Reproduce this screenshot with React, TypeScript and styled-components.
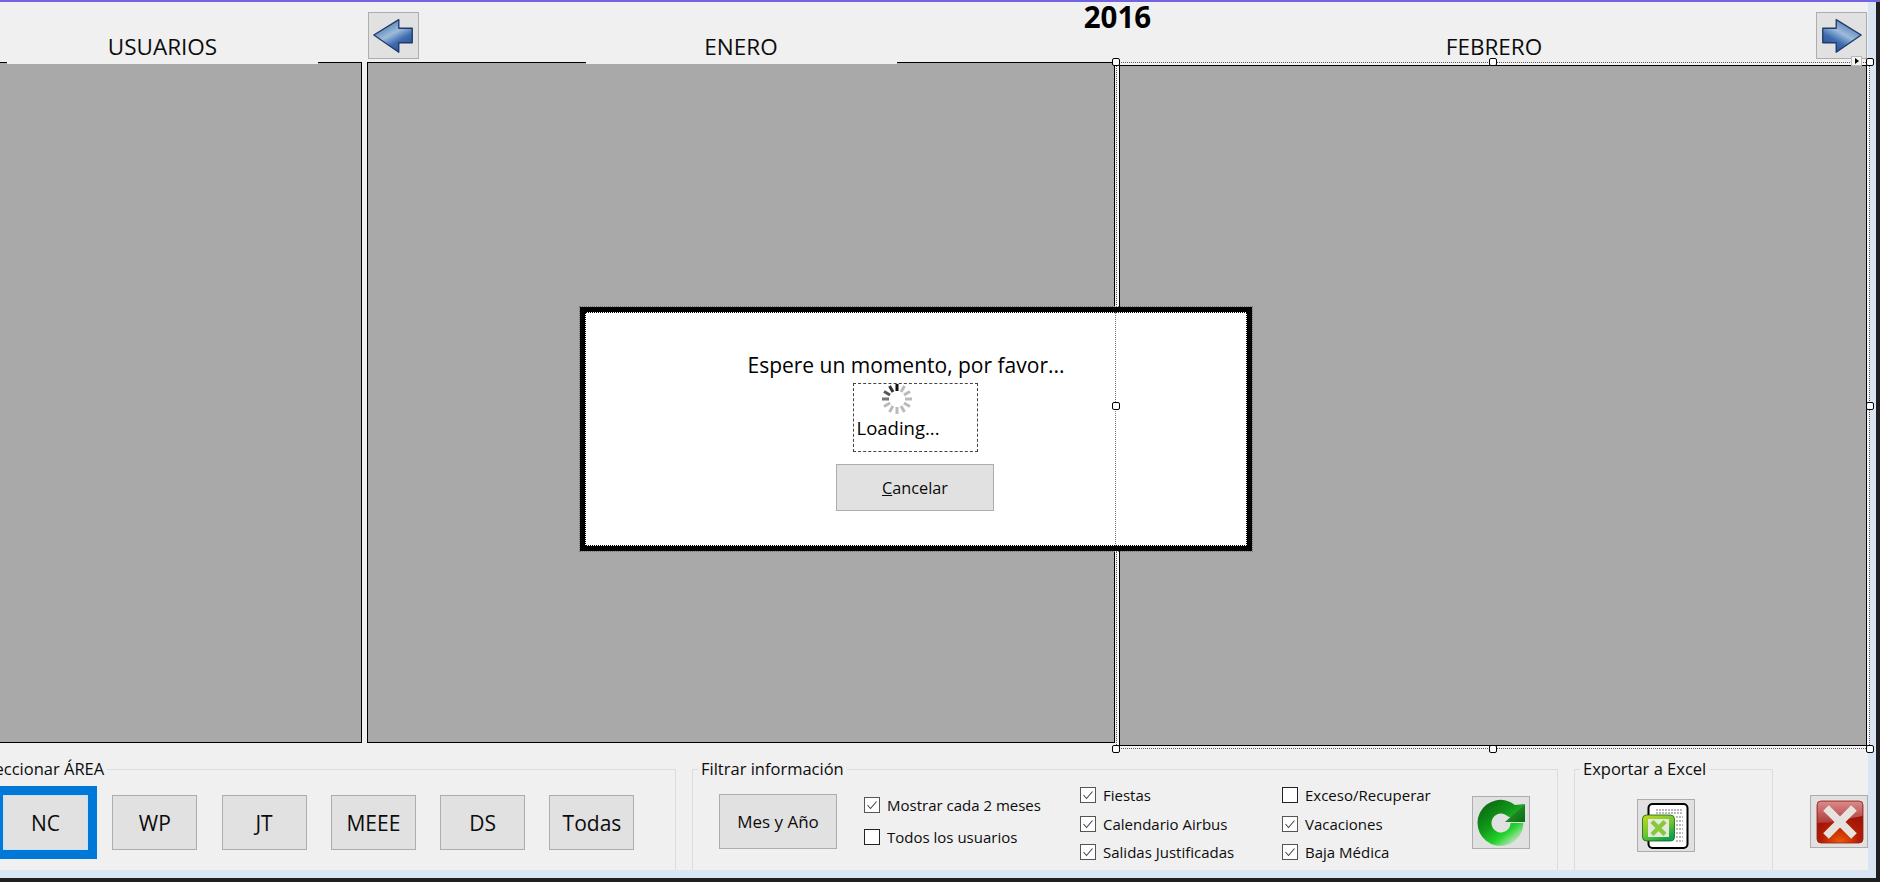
import React from "react";
import styled, { createGlobalStyle, css } from "styled-components";

const GlobalStyle = createGlobalStyle`
  * { box-sizing: border-box; }
  html, body { margin: 0; padding: 0; background: #1f1f1f; overflow: hidden; }
  body { font-family: "Open Sans", "Noto Sans", sans-serif; color: #0c0c0c; }
`;

const FONT = `"Open Sans", "Noto Sans", sans-serif`;

const Page = styled.div`
  position: relative;
  width: 1880px;
  height: 882px;
  display: flex;
  flex-direction: column;
  overflow: hidden;
  background: #1f1f1f;
`;

const TitleEdge = styled.div`
  height: 2px;
  flex: none;
  background: #7263e2;
`;

const Frame = styled.div`
  width: 1876px;
  height: 876px;
  flex: none;
  padding: 0 8px 8px 0;
  background: #d9e5f3;
`;

const Form = styled.div`
  height: 100%;
  display: flex;
  flex-direction: column;
  background: #f0f0f0;
`;

const Calendar = styled.section`
  flex: none;
  margin-left: -37px;
  display: grid;
  grid-template-columns: 399px 5px 748px 1fr;
  grid-template-rows: 60px 681px;
`;

const Year = styled.div`
  grid-column: 3 / 5;
  grid-row: 1;
  justify-self: center;
  align-self: start;
  font: 700 29.5px/30px ${FONT};
  color: #000;
`;

const MonthLabel = styled.div<{ $col: number; $shift?: number }>`
  grid-column: ${(p) => p.$col};
  grid-row: 1;
  justify-self: center;
  align-self: end;
  position: relative;
  z-index: 1;
  width: 311px;
  height: 30px;
  margin-bottom: -2px;
  padding-left: ${(p) => p.$shift ?? 0}px;
  background: #f0f0f0;
  text-align: center;
  font-size: 22.5px;
  line-height: 26px;
`;

const Panel = styled.div<{ $col?: number }>`
  grid-column: ${(p) => p.$col ?? "auto"};
  grid-row: 2;
  background: #a9a9a9;
  border: 1px solid #000;
`;

const Selection = styled.div`
  grid-column: 4;
  grid-row: 2;
  position: relative;
  z-index: 1;
  display: flex;
  margin: 0 -2px -6px 1px;
  padding: 2px;
  background: #f5f5f5;
  border: 1px dotted #555;
`;

const SelectedPanel = styled(Panel)`
  flex: 1;
`;

const Handle = styled.span<{ $h: "start" | "mid" | "end"; $v: "start" | "mid" | "end" }>`
  position: absolute;
  width: 8px;
  height: 8px;
  background: #fff;
  border: 1px solid #000;
  border-radius: 2px;
  ${(p) => (p.$h === "start" ? "left: -5px;" : p.$h === "end" ? "right: -5px;" : "left: 50%; margin-left: -4px;")}
  ${(p) => (p.$v === "start" ? "top: -5px;" : p.$v === "end" ? "bottom: -5px;" : "top: 50%; margin-top: -4px;")}
`;

const SmartTag = styled.span`
  position: absolute;
  top: -7px;
  right: 7px;
  width: 11px;
  height: 10px;
  background: #f4f4f4;
  border: 1px solid #bbb;
  &::after {
    content: "";
    position: absolute;
    left: 3px;
    top: 1px;
    border-left: 4px solid #000;
    border-top: 3px solid transparent;
    border-bottom: 3px solid transparent;
  }
`;

const Button = styled.button`
  flex: none;
  padding: 0;
  display: flex;
  align-items: center;
  justify-content: center;
  background: #e1e1e1;
  border: 1px solid #adadad;
  color: #0c0c0c;
  font-family: ${FONT};
`;

const NavButton = styled(Button)<{ $col: number; $side: "start" | "end" }>`
  grid-column: ${(p) => p.$col};
  grid-row: 1;
  justify-self: ${(p) => p.$side};
  align-self: start;
  width: 51px;
  height: 47px;
  margin-top: 10px;
  ${(p) => p.$side === "start" && "margin-left: 1px;"}
  ${(p) => p.$side === "end" && "margin-right: 1px;"}
`;

const Footer = styled.footer`
  flex: 1;
  margin-left: -45px;
  padding-top: 16px;
  display: flex;
  align-items: flex-start;
`;

const Group = styled.fieldset<{ $width: number; $gap?: number }>`
  flex: none;
  width: ${(p) => p.$width}px;
  height: 111px;
  min-width: 0;
  margin: 0 ${(p) => p.$gap ?? 16}px 0 0;
  padding: 0;
  border: 1px solid #dcdcdc;
  border-bottom: none;
`;

const Legend = styled.legend<{ $indent?: number }>`
  margin-left: ${(p) => p.$indent ?? 5}px;
  padding: 0 3px;
  font-size: 16.5px;
  line-height: 20px;
`;

const AreaRow = styled.div`
  display: flex;
  gap: 24.3px;
  padding: 16px 0 0 47px;
`;

const AreaButton = styled(Button)<{ $active?: boolean }>`
  width: 85px;
  height: 55px;
  font-size: 21px;
  ${(p) =>
    p.$active &&
    css`
      border-color: #c5e3f8;
      box-shadow: 0 0 0 9px #0078d7;
    `}
`;

const FilterRow = styled.div`
  display: flex;
  align-items: flex-start;
  padding: 6px 0 0 26px;
`;

const MonthYearButton = styled(Button)`
  width: 118px;
  height: 55px;
  margin: 9px 27px 0 0;
  font-size: 17px;
`;

const CheckColumn = styled.div<{ $width: number; $gap: number; $top?: number }>`
  flex: none;
  width: ${(p) => p.$width}px;
  margin-top: ${(p) => p.$top ?? 0}px;
  display: flex;
  flex-direction: column;
  gap: ${(p) => p.$gap}px;
`;

const Check = styled.label`
  display: flex;
  align-items: center;
  gap: 7px;
  height: 20px;
  font-size: 15px;
  line-height: 20px;
  white-space: nowrap;
`;

const Box = styled.span<{ $on?: boolean }>`
  flex: none;
  width: 16px;
  height: 16px;
  display: flex;
  align-items: center;
  justify-content: center;
  background: #fff;
  border: 1px solid ${(p) => (p.$on ? "#555" : "#222")};
`;

const RefreshButton = styled(Button)`
  width: 58px;
  height: 53px;
  margin-top: 11px;
`;

const ExcelRow = styled.div`
  padding: 20px 0 0 62px;
`;

const ExcelButton = styled(Button)`
  width: 58px;
  height: 53px;
`;

const CloseButton = styled(Button)`
  width: 58px;
  height: 53px;
  margin: 36px 0 0 37px;
`;

const Dialog = styled.div`
  position: absolute;
  left: 580px;
  top: 307px;
  z-index: 2;
  width: 672px;
  height: 244px;
  display: flex;
  flex-direction: column;
  align-items: center;
  padding: 39px 2px 0 0;
  background: #fff;
  border: 5px solid #000;
  outline: 1px dotted #777;
  &::before {
    content: "";
    position: absolute;
    inset: 0;
    border: 1px dotted #000;
  }
`;

const GuideLine = styled.div`
  position: absolute;
  left: 530px;
  top: 0;
  bottom: 0;
  border-left: 1px dotted #777;
`;

const GuideHandle = styled.span`
  position: absolute;
  left: 527px;
  top: 90px;
  width: 8px;
  height: 8px;
  background: #fff;
  border: 1px solid #000;
  border-radius: 2px;
`;

const Message = styled.div`
  margin-right: 18px;
  font-size: 21px;
  line-height: 28px;
  color: #000;
`;

const LoadingBox = styled.div`
  width: 125px;
  height: 69px;
  margin-top: 4px;
  padding-left: 3px;
  border: 1px dashed #444;
  overflow: hidden;
`;

const Spinner = styled.svg`
  display: block;
  margin: -1px 0 0 24px;
`;

const LoadingText = styled.div`
  margin-top: 1px;
  font-size: 18.5px;
  line-height: 24px;
  color: #000;
`;

const CancelButton = styled(Button)`
  width: 158px;
  height: 47px;
  margin-top: 12px;
  font-size: 16.3px;
`;

const ArrowIcon = ({ flip }: { flip?: boolean }) => (
  <svg width="51" height="47" viewBox="0 0 51 47" style={flip ? { transform: "scaleX(-1)" } : undefined}>
    <defs>
      <linearGradient id={flip ? "arrowR" : "arrowL"} x1="0.1" y1="0.1" x2="0.7" y2="1">
        <stop offset="0" stopColor="#3d6ba6" />
        <stop offset="0.45" stopColor="#9dbbdb" />
        <stop offset="0.7" stopColor="#3f6db0" />
        <stop offset="1" stopColor="#24508f" />
      </linearGradient>
    </defs>
    <path
      d="M5 23 L31 7 V16 H45 V31 H31 V41 Z"
      fill={`url(#${flip ? "arrowR" : "arrowL"})`}
      stroke="#1f3a6b"
      strokeWidth="1.4"
      strokeLinejoin="round"
    />
  </svg>
);

const RefreshIcon = () => (
  <svg width="56" height="51" viewBox="0 0 56 51">
    <defs>
      <linearGradient id="refreshFill" x1="0.1" y1="0" x2="0.85" y2="0.95">
        <stop offset="0" stopColor="#0b5f12" />
        <stop offset="0.45" stopColor="#129a1a" />
        <stop offset="0.72" stopColor="#22d32a" />
        <stop offset="1" stopColor="#e2e8e0" />
      </linearGradient>
      <linearGradient id="refreshHead" x1="0" y1="0" x2="1" y2="1">
        <stop offset="0" stopColor="#2fa336" />
        <stop offset="1" stopColor="#0b6b12" />
      </linearGradient>
    </defs>
    <path
      d="M42 8 A23 23 0 1 0 50.5 26 L37.5 26 A9.5 9.5 0 1 1 35 19.6 L38 20.6 L52 7 Z"
      fill="url(#refreshFill)"
    />
    <path d="M52 7 V25 H32 Z" fill="url(#refreshHead)" />
  </svg>
);

const ExcelIcon = () => (
  <svg width="56" height="51" viewBox="0 0 56 51">
    <defs>
      <linearGradient id="excelEdge" x1="0" y1="0" x2="0.6" y2="1">
        <stop offset="0" stopColor="#c3dc1c" />
        <stop offset="0.6" stopColor="#6fc530" />
        <stop offset="1" stopColor="#12a24a" />
      </linearGradient>
    </defs>
    <rect x="10.5" y="4" width="39" height="44" rx="4" fill="#fff" stroke="#000" strokeWidth="2" />
    {[10, 13, 17, 21, 25, 29, 33, 37, 41].map((y) => (
      <path key={y} d={`M${y < 15 ? 18 : 38} ${y} H45`} stroke="#777" strokeWidth="1" strokeDasharray="2 1" />
    ))}
    <rect x="4.5" y="15" width="32" height="26" rx="4" fill="url(#excelEdge)" stroke="#11601f" strokeWidth="0.8" />
    <rect x="10" y="19" width="21" height="18" fill="#e4e8dd" />
    <path d="M14 21.5 L27 34.5 M27 21.5 L14 34.5" stroke="#86c93a" strokeWidth="4.5" />
  </svg>
);

const CloseIcon = () => (
  <svg width="56" height="51" viewBox="0 0 56 51">
    <defs>
      <linearGradient id="closeTop" x1="0" y1="0" x2="0" y2="1">
        <stop offset="0" stopColor="#d98a8a" />
        <stop offset="1" stopColor="#b23a3a" />
      </linearGradient>
      <radialGradient id="closeBottom" cx="0.5" cy="1" r="0.75">
        <stop offset="0" stopColor="#f25c05" />
        <stop offset="0.55" stopColor="#b51d05" />
        <stop offset="1" stopColor="#9c1204" />
      </radialGradient>
    </defs>
    <rect x="6" y="5" width="46" height="42" rx="4" fill="url(#closeBottom)" stroke="#8f1f1f" strokeWidth="0.8" />
    <path d="M6.5 9 a3.5 3.5 0 0 1 3.5 -3.5 H48 a3.5 3.5 0 0 1 3.5 3.5 V20 C38 22 24 27 6.5 27 Z" fill="url(#closeTop)" />
    <path d="M15 12 L43 40 M43 12 L15 40" stroke="#e6e2de" strokeWidth="8" />
  </svg>
);

const CheckMark = () => (
  <svg width="12" height="10" viewBox="0 0 12 10">
    <path d="M1.5 5 L4.5 8.5 L10.5 1.5" fill="none" stroke="#444" strokeWidth="1.1" />
  </svg>
);

const SPOKES = ["#111", "#bbb", "#bbb", "#bbb", "#bbb", "#bbb", "#bbb", "#bbb", "#bbb", "#777", "#555", "#333"];

const LoadingSpinner = () => (
  <Spinner width="32" height="32" viewBox="-16 -16 32 32">
    {SPOKES.map((color, i) => (
      <rect key={i} x="-1.5" y="-15" width="3" height="7" fill={color} transform={`rotate(${i * 30})`} />
    ))}
  </Spinner>
);

const CheckItem = ({ label, on }: { label: string; on?: boolean }) => (
  <Check>
    <Box $on={on}>{on && <CheckMark />}</Box>
    {label}
  </Check>
);

const AREAS = ["NC", "WP", "JT", "MEEE", "DS", "Todas"];

export default function App() {
  return (
    <Page>
      <GlobalStyle />
      <TitleEdge />
      <Frame>
        <Form>
          <Calendar>
            <MonthLabel $col={1}>USUARIOS</MonthLabel>
            <NavButton $col={3} $side="start">
              <ArrowIcon />
            </NavButton>
            <MonthLabel $col={3}>ENERO</MonthLabel>
            <Year>2016</Year>
            <MonthLabel $col={4} $shift={5}>
              FEBRERO
            </MonthLabel>
            <NavButton $col={4} $side="end">
              <ArrowIcon flip />
            </NavButton>
            <Panel $col={1} />
            <Panel $col={3} />
            <Selection>
              <SelectedPanel />
              <Handle $h="start" $v="start" />
              <Handle $h="mid" $v="start" />
              <Handle $h="end" $v="start" />
              <Handle $h="end" $v="mid" />
              <Handle $h="start" $v="end" />
              <Handle $h="mid" $v="end" />
              <Handle $h="end" $v="end" />
              <SmartTag />
            </Selection>
          </Calendar>
          <Footer>
            <Group $width={721}>
              <Legend $indent={13}>Seleccionar ÁREA</Legend>
              <AreaRow>
                {AREAS.map((area, i) => (
                  <AreaButton key={area} $active={i === 0}>
                    {area}
                  </AreaButton>
                ))}
              </AreaRow>
            </Group>
            <Group $width={866}>
              <Legend>Filtrar información</Legend>
              <FilterRow>
                <MonthYearButton>Mes y Año</MonthYearButton>
                <CheckColumn $width={216} $gap={12} $top={10}>
                  <CheckItem label="Mostrar cada 2 meses" on />
                  <CheckItem label="Todos los usuarios" />
                </CheckColumn>
                <CheckColumn $width={202} $gap={8.5}>
                  <CheckItem label="Fiestas" on />
                  <CheckItem label="Calendario Airbus" on />
                  <CheckItem label="Salidas Justificadas" on />
                </CheckColumn>
                <CheckColumn $width={190} $gap={8.5}>
                  <CheckItem label="Exceso/Recuperar" />
                  <CheckItem label="Vacaciones" on />
                  <CheckItem label="Baja Médica" on />
                </CheckColumn>
                <RefreshButton>
                  <RefreshIcon />
                </RefreshButton>
              </FilterRow>
            </Group>
            <Group $width={199} $gap={0}>
              <Legend>Exportar a Excel</Legend>
              <ExcelRow>
                <ExcelButton>
                  <ExcelIcon />
                </ExcelButton>
              </ExcelRow>
            </Group>
            <CloseButton>
              <CloseIcon />
            </CloseButton>
          </Footer>
        </Form>
      </Frame>
      <Dialog>
        <GuideLine />
        <GuideHandle />
        <Message>Espere un momento, por favor...</Message>
        <LoadingBox>
          <LoadingSpinner />
          <LoadingText>Loading...</LoadingText>
        </LoadingBox>
        <CancelButton>
          <span>
            <u>C</u>ancelar
          </span>
        </CancelButton>
      </Dialog>
    </Page>
  );
}
